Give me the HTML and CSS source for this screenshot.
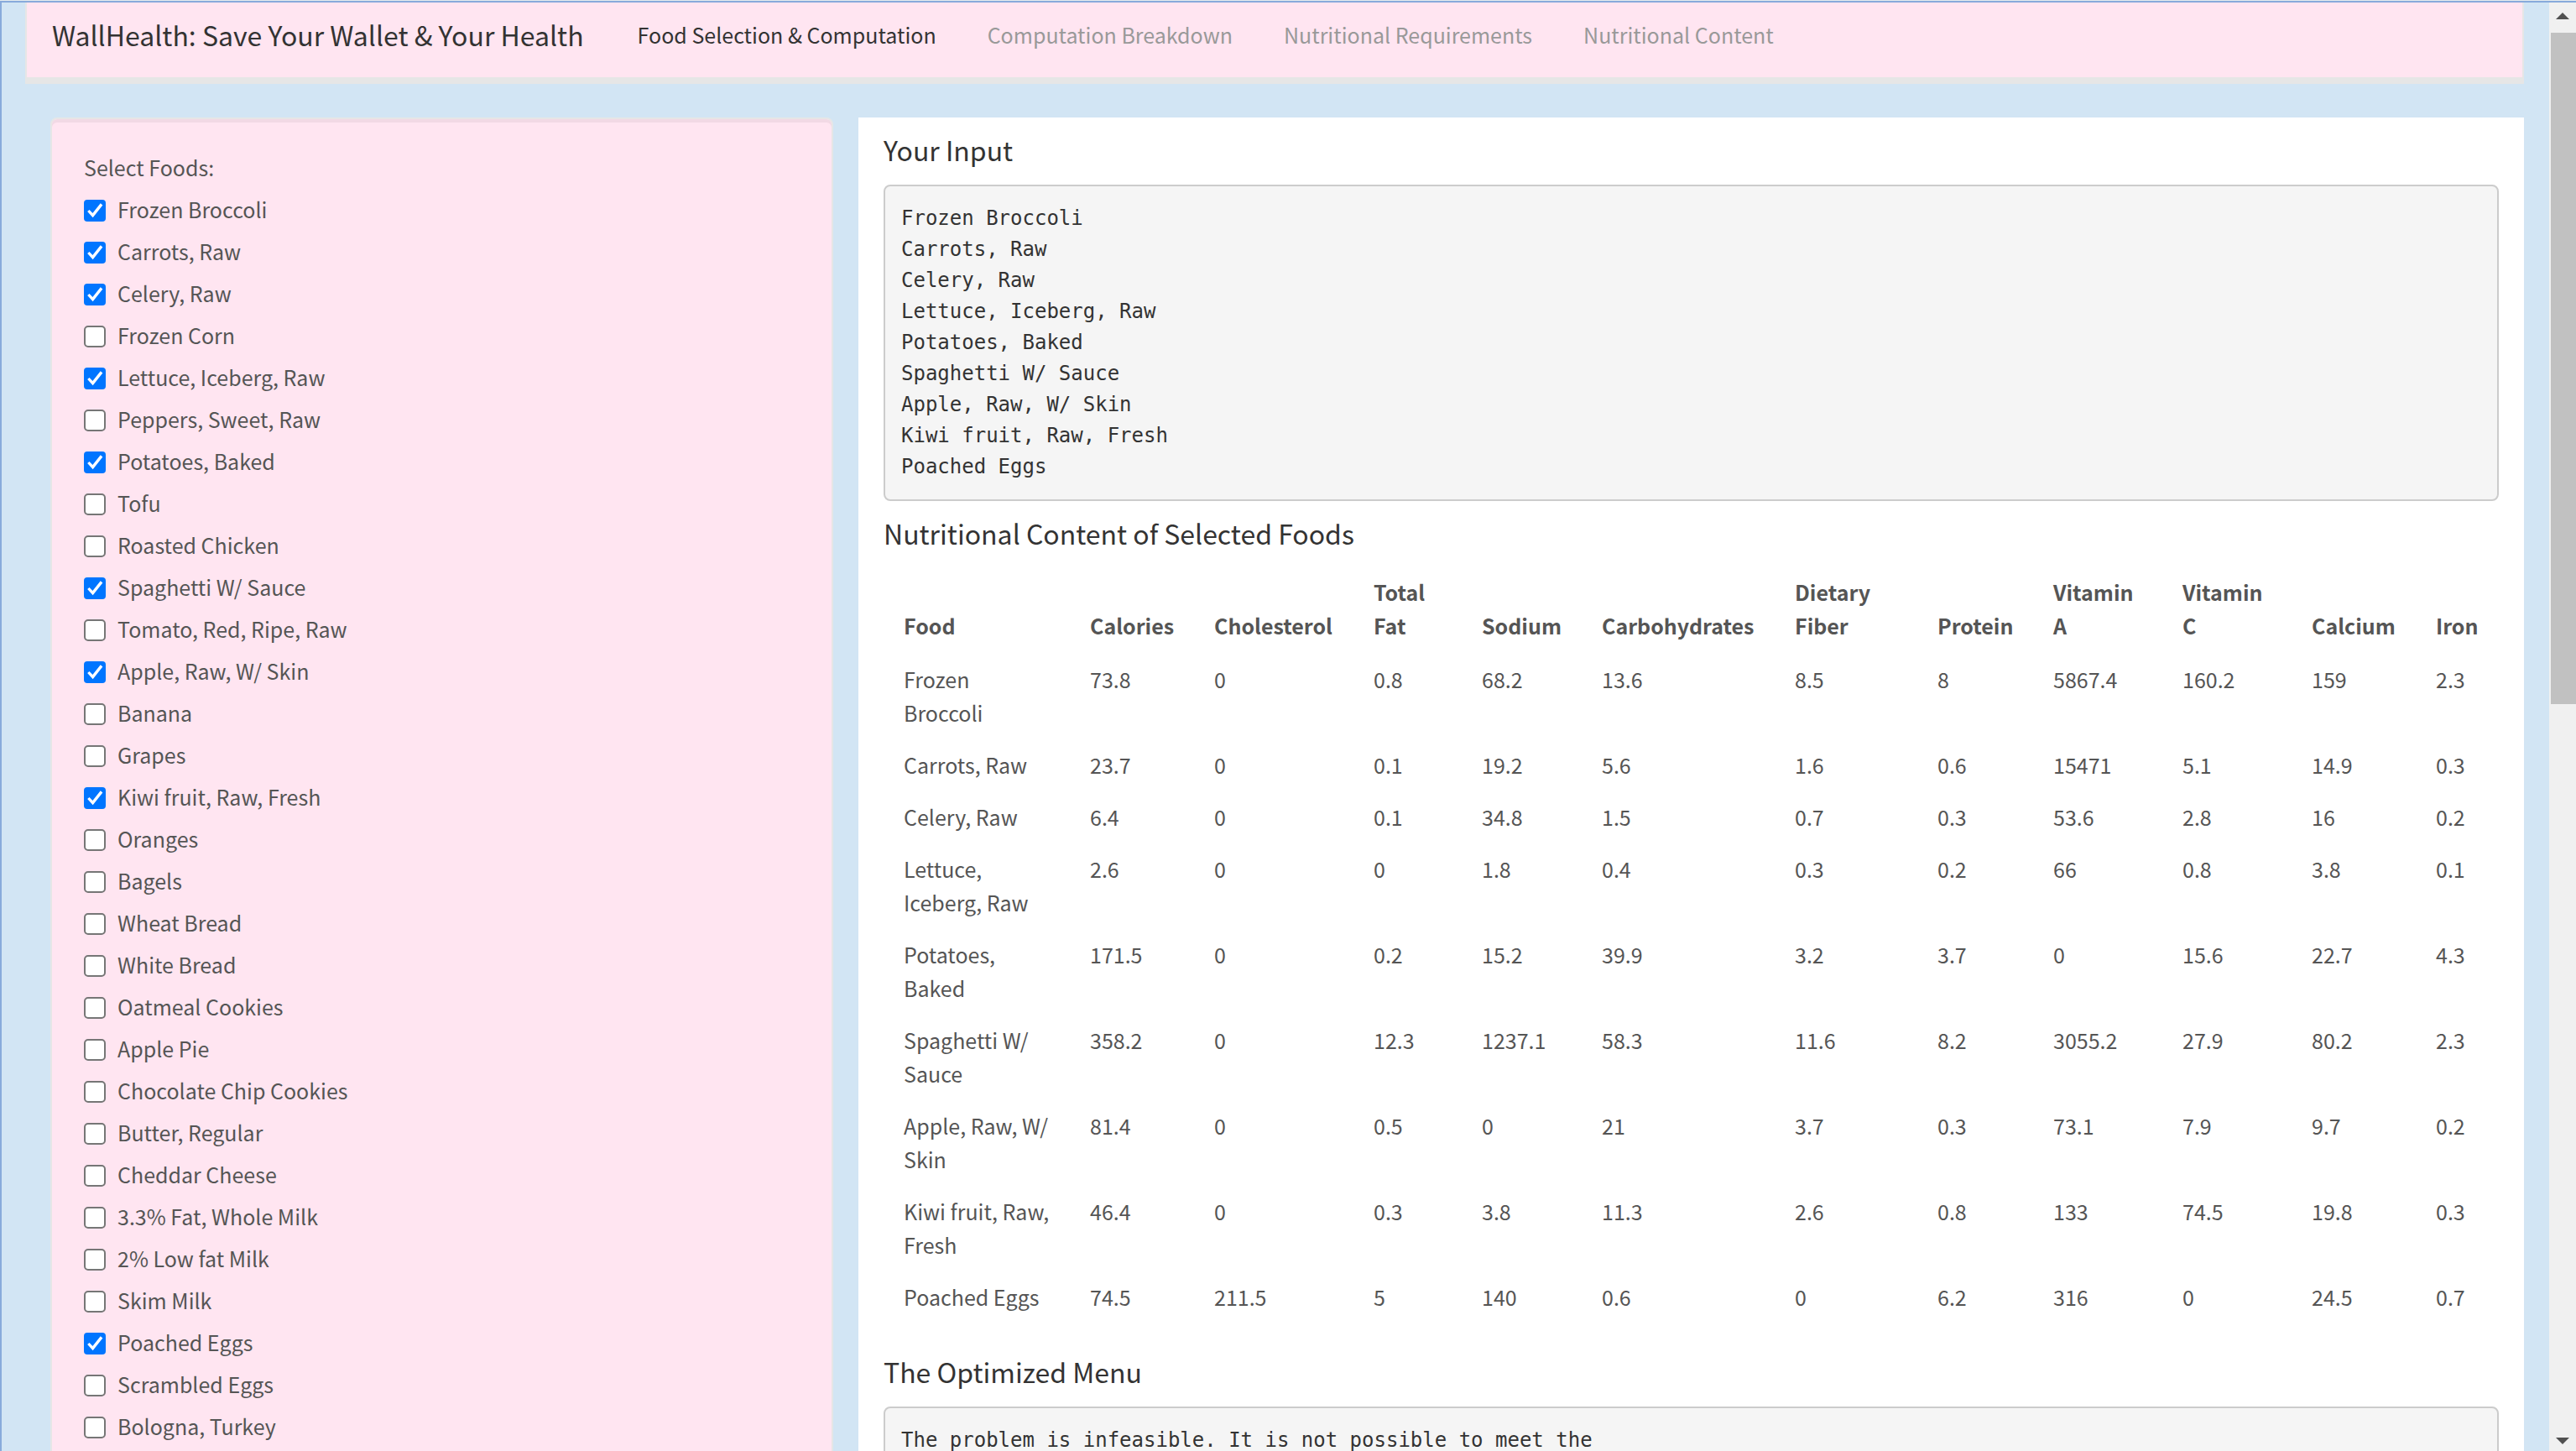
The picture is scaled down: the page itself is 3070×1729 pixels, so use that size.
FILE: index.html
```html
<!DOCTYPE html>
<html lang="en">
<head>
<meta charset="utf-8">
<title>WallHealth</title>
<link rel="stylesheet" href="styles.css">
</head>
<body>
<div class="window">
  <div class="page">
    <nav class="navbar">
      <span class="brand">WallHealth: Save Your Wallet &amp; Your Health</span>
      <ul class="tabs">
        <li><a class="tab active" href="#">Food Selection &amp; Computation</a></li>
        <li><a class="tab" href="#">Computation Breakdown</a></li>
        <li><a class="tab" href="#">Nutritional Requirements</a></li>
        <li><a class="tab" href="#">Nutritional Content</a></li>
      </ul>
    </nav>
    <div class="layout">
      <form class="well">
        <fieldset class="foods">
          <legend class="foods-title">Select Foods:</legend>
          <label class="food"><input type="checkbox" checked>Frozen Broccoli</label>
          <label class="food"><input type="checkbox" checked>Carrots, Raw</label>
          <label class="food"><input type="checkbox" checked>Celery, Raw</label>
          <label class="food"><input type="checkbox">Frozen Corn</label>
          <label class="food"><input type="checkbox" checked>Lettuce, Iceberg, Raw</label>
          <label class="food"><input type="checkbox">Peppers, Sweet, Raw</label>
          <label class="food"><input type="checkbox" checked>Potatoes, Baked</label>
          <label class="food"><input type="checkbox">Tofu</label>
          <label class="food"><input type="checkbox">Roasted Chicken</label>
          <label class="food"><input type="checkbox" checked>Spaghetti W/ Sauce</label>
          <label class="food"><input type="checkbox">Tomato, Red, Ripe, Raw</label>
          <label class="food"><input type="checkbox" checked>Apple, Raw, W/ Skin</label>
          <label class="food"><input type="checkbox">Banana</label>
          <label class="food"><input type="checkbox">Grapes</label>
          <label class="food"><input type="checkbox" checked>Kiwi fruit, Raw, Fresh</label>
          <label class="food"><input type="checkbox">Oranges</label>
          <label class="food"><input type="checkbox">Bagels</label>
          <label class="food"><input type="checkbox">Wheat Bread</label>
          <label class="food"><input type="checkbox">White Bread</label>
          <label class="food"><input type="checkbox">Oatmeal Cookies</label>
          <label class="food"><input type="checkbox">Apple Pie</label>
          <label class="food"><input type="checkbox">Chocolate Chip Cookies</label>
          <label class="food"><input type="checkbox">Butter, Regular</label>
          <label class="food"><input type="checkbox">Cheddar Cheese</label>
          <label class="food"><input type="checkbox">3.3% Fat, Whole Milk</label>
          <label class="food"><input type="checkbox">2% Low fat Milk</label>
          <label class="food"><input type="checkbox">Skim Milk</label>
          <label class="food"><input type="checkbox" checked>Poached Eggs</label>
          <label class="food"><input type="checkbox">Scrambled Eggs</label>
          <label class="food"><input type="checkbox">Bologna, Turkey</label>
        </fieldset>
      </form>
      <main class="panel">
        <h4>Your Input</h4>
        <pre>Frozen Broccoli
Carrots, Raw
Celery, Raw
Lettuce, Iceberg, Raw
Potatoes, Baked
Spaghetti W/ Sauce
Apple, Raw, W/ Skin
Kiwi fruit, Raw, Fresh
Poached Eggs</pre>
        <h4>Nutritional Content of Selected Foods</h4>
        <table>
          <colgroup>
            <col class="c-food"><col class="c-calories"><col class="c-cholesterol"><col class="c-fat"><col class="c-sodium"><col class="c-carbs"><col class="c-fiber"><col class="c-protein"><col class="c-vitamin"><col class="c-vitamin"><col class="c-calcium"><col>
          </colgroup>
          <thead>
            <tr><th>Food</th><th>Calories</th><th>Cholesterol</th><th>Total Fat</th><th>Sodium</th><th>Carbohydrates</th><th>Dietary Fiber</th><th>Protein</th><th>Vitamin A</th><th>Vitamin C</th><th>Calcium</th><th>Iron</th></tr>
          </thead>
          <tbody>
            <tr><td>Frozen Broccoli</td><td>73.8</td><td>0</td><td>0.8</td><td>68.2</td><td>13.6</td><td>8.5</td><td>8</td><td>5867.4</td><td>160.2</td><td>159</td><td>2.3</td></tr>
            <tr><td>Carrots, Raw</td><td>23.7</td><td>0</td><td>0.1</td><td>19.2</td><td>5.6</td><td>1.6</td><td>0.6</td><td>15471</td><td>5.1</td><td>14.9</td><td>0.3</td></tr>
            <tr><td>Celery, Raw</td><td>6.4</td><td>0</td><td>0.1</td><td>34.8</td><td>1.5</td><td>0.7</td><td>0.3</td><td>53.6</td><td>2.8</td><td>16</td><td>0.2</td></tr>
            <tr><td>Lettuce, Iceberg, Raw</td><td>2.6</td><td>0</td><td>0</td><td>1.8</td><td>0.4</td><td>0.3</td><td>0.2</td><td>66</td><td>0.8</td><td>3.8</td><td>0.1</td></tr>
            <tr><td>Potatoes, Baked</td><td>171.5</td><td>0</td><td>0.2</td><td>15.2</td><td>39.9</td><td>3.2</td><td>3.7</td><td>0</td><td>15.6</td><td>22.7</td><td>4.3</td></tr>
            <tr><td>Spaghetti W/ Sauce</td><td>358.2</td><td>0</td><td>12.3</td><td>1237.1</td><td>58.3</td><td>11.6</td><td>8.2</td><td>3055.2</td><td>27.9</td><td>80.2</td><td>2.3</td></tr>
            <tr><td>Apple, Raw, W/ Skin</td><td>81.4</td><td>0</td><td>0.5</td><td>0</td><td>21</td><td>3.7</td><td>0.3</td><td>73.1</td><td>7.9</td><td>9.7</td><td>0.2</td></tr>
            <tr><td>Kiwi fruit, Raw, Fresh</td><td>46.4</td><td>0</td><td>0.3</td><td>3.8</td><td>11.3</td><td>2.6</td><td>0.8</td><td>133</td><td>74.5</td><td>19.8</td><td>0.3</td></tr>
            <tr><td>Poached Eggs</td><td>74.5</td><td>211.5</td><td>5</td><td>140</td><td>0.6</td><td>0</td><td>6.2</td><td>316</td><td>0</td><td>24.5</td><td>0.7</td></tr>
          </tbody>
        </table>
        <h4>The Optimized Menu</h4>
        <pre>The problem is infeasible. It is not possible to meet the</pre>
      </main>
    </div>
  </div>
  <div class="scrollbar" aria-hidden="true">
    <svg class="arrow" viewBox="0 0 16 8"><path d="M8 0L16 8H0z"/></svg>
    <div class="track"><div class="thumb"></div></div>
    <svg class="arrow" viewBox="0 0 16 8"><path d="M0 0H16L8 8z"/></svg>
  </div>
</div>
</body>
</html>
```
FILE: styles.css
```css
* { box-sizing: border-box; }

body {
  margin: 0;
  height: 100vh;
  overflow: hidden;
  border-top: 1px solid #e4ecef;
  background: #d2e5f4;
  color: #555;
  font: 25px/40px "Noto Sans CJK SC", "Open Sans", sans-serif;
}

.window {
  display: flex;
  height: 100%;
  overflow: hidden;
  border-top: 2px solid #88aadb;
  border-left: 2px solid #88aadb;
}

.page {
  flex: 1;
  min-width: 0;
  padding: 0 30px 0 28px;
}

/* Navigation */
.navbar {
  display: flex;
  gap: 64px;
  padding: 18px 30px 31px;
  border: solid #e6e6e6;
  border-width: 0 2px 8px;
  background: #ffe5f1;
}

.brand { color: #333; font-size: 32px; }

.tabs {
  display: flex;
  gap: 61px;
  margin: 0;
  padding: 0;
  list-style: none;
}

.tab { color: #999; text-decoration: none; }
.tab.active { color: #333; }

/* Two columns */
.layout {
  display: grid;
  grid-template-columns: minmax(0, 933fr) minmax(0, 1985fr);
  gap: 30px;
  margin: 40px 0 0 30px;
}

.well {
  padding: 37px 38px;
  border: 2px solid #e6e6e6;
  border-radius: 8px;
  background: #ffe5f1;
  box-shadow: inset 0 4px 0 #f2d9e5;
}

.foods {
  display: flex;
  flex-direction: column;
  gap: 10px;
  margin: 0;
  padding: 0;
  border: 0;
}

.foods-title { padding: 0; margin-bottom: 10px; }

.food {
  display: flex;
  align-items: flex-start;
  gap: 14px;
}

.food input {
  appearance: none;
  width: 26px;
  height: 26px;
  margin: 9px 0 0;
  border: 2px solid #767676;
  border-radius: 5px;
  background: #fff;
}

.food input:checked {
  border: 0;
  border-radius: 4px;
  background: #0075ff;
}

.food input:checked::before {
  content: "";
  display: block;
  height: 26px;
  background: #fff;
  clip-path: polygon(16% 54%, 25% 46%, 40% 62%, 76% 16%, 86% 25%, 41% 82%);
}

.panel {
  display: flow-root;
  padding: 0 30px 30px;
  background: #fff;
}

h4 {
  margin: 18px 0 22px;
  color: #333;
  font-size: 32px;
  font-weight: 400;
  line-height: 40px;
}

pre {
  margin: 0;
  padding: 20px 19px;
  border: 2px solid #ccc;
  border-radius: 8px;
  background: #f5f5f5;
  color: #333;
  font: 24px/37px "DejaVu Sans Mono", monospace;
}

/* Nutrition table */
table {
  width: 100%;
  margin-bottom: 38px;
  border-collapse: collapse;
  table-layout: fixed;
}

th, td {
  padding: 11px 24px;
  text-align: left;
  vertical-align: top;
}

th {
  padding: 8px 24px 13px;
  vertical-align: bottom;
}

.c-food { width: 222px; }
.c-calories { width: 148px; }
.c-cholesterol { width: 190px; }
.c-fat { width: 129px; }
.c-sodium { width: 143px; }
.c-carbs { width: 230px; }
.c-fiber { width: 170px; }
.c-protein { width: 138px; }
.c-vitamin { width: 154px; }
.c-calcium { width: 148px; }

/* Scrollbar */
.scrollbar {
  display: flex;
  flex-direction: column;
  align-items: center;
  width: 32px;
  padding: 12px 0 8px;
  background: #f0f0f0;
}

.arrow {
  width: 16px;
  height: 8px;
  fill: #505050;
}

.track {
  flex: 1;
  align-self: stretch;
  padding: 16px 0 16px 2px;
}

.thumb {
  height: calc(48% + 4px);
  background: #c1c1c1;
}
```
